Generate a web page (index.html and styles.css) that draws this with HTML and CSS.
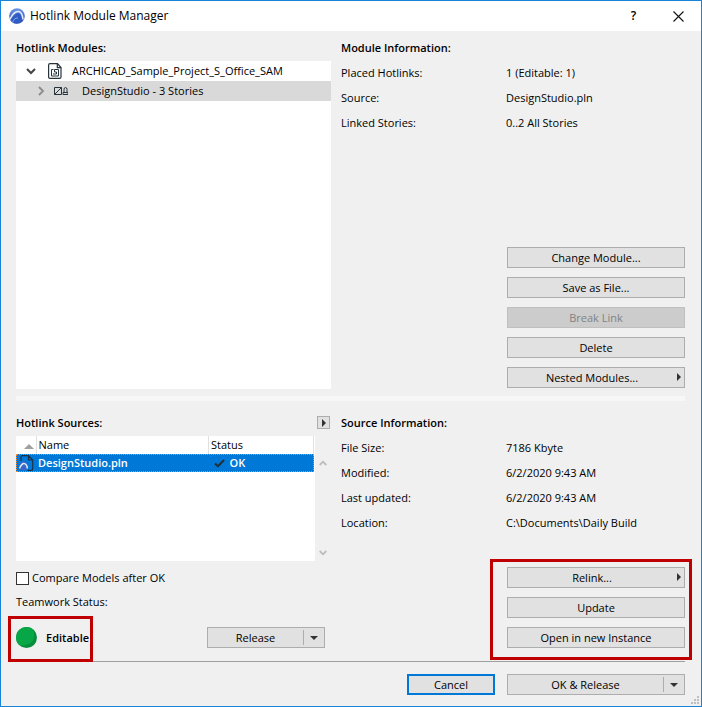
FILE: index.html
```html
<!DOCTYPE html>
<html lang="en">
<head>
<meta charset="utf-8">
<meta name="viewport" content="width=device-width, initial-scale=1">
<title>Hotlink Module Manager</title>
<link rel="stylesheet" href="styles.css">
</head>
<body>
<div class="window" role="dialog" aria-labelledby="dialog-title">
  <header class="titlebar">
    <svg class="app-icon" viewBox="0 0 16 16" aria-hidden="true">
      <defs>
        <linearGradient id="ball" x1="0" y1="0" x2="0" y2="1">
          <stop offset="0" stop-color="#6f98e6"/>
          <stop offset="1" stop-color="#2748a8"/>
        </linearGradient>
      </defs>
      <circle cx="8" cy="8" r="7.8" fill="url(#ball)"/>
      <path d="M.8 11.500C3 7 6.500 3.300 9.500 3.600C12.300 4 13.600 7.500 14 11.500" fill="none" stroke="#e6edfb" stroke-width="1.500"/>
      <path d="M1.500 12.500C4 8.300 7 5 9.300 5.200C11.500 5.500 12.600 9 12.800 13Q8 17.500 3 14z" fill="#2f5cc4"/>
      <path d="M3.500 14.500C4.500 11.500 6.600 9.600 9 10" fill="none" stroke="#8facea" stroke-width="1"/>
    </svg>
    <h1 class="title" id="dialog-title">Hotlink Module Manager</h1>
    <button class="caption-button" type="button" aria-label="Help">?</button>
    <button class="caption-button" type="button" aria-label="Close">
      <svg class="close-icon" viewBox="0 0 11 11" aria-hidden="true"><path d="M.5.5l10 10M10.500.5l-10 10" fill="none" stroke="#111" stroke-width="1.1"/></svg>
    </button>
  </header>

  <main class="content">
    <section class="panes panes-modules">
      <div class="pane">
        <h2 class="heading">Hotlink Modules:</h2>
        <ul class="tree">
          <li class="tree-row">
            <button class="expander" type="button" aria-label="Collapse">
              <svg class="chevron" viewBox="0 0 10 10" aria-hidden="true"><path d="M1 3l4 4 4-4" fill="none" stroke="#444" stroke-width="2"/></svg>
            </button>
            <svg class="file-icon" viewBox="0 0 14 16" aria-hidden="true">
              <path d="M2 .6h7.500L13 4.500V14q0 1.400-1.400 1.400H2Q.6 15.400.6 14V2Q.6.6 2 .6zM9.300.7v4H13" fill="none" stroke="#26343b" stroke-width="1.200"/>
              <path d="M5.500 6.500h-2v6.500h7V6.500H6.500V9h2v2H5" fill="none" stroke="#26343b" stroke-width="1"/>
            </svg>
            <span>ARCHICAD_Sample_Project_S_Office_SAM</span>
          </li>
          <li class="tree-row tree-child selected">
            <button class="expander" type="button" aria-label="Expand">
              <svg class="chevron" viewBox="0 0 10 10" aria-hidden="true"><path d="M3 1l4 4-4 4" fill="none" stroke="#8b8b8b" stroke-width="1.800"/></svg>
            </button>
            <svg class="link-icon" viewBox="0 0 14 8" aria-hidden="true">
              <path d="M.5.500h7v7h-7zM.5 7.500l7-7M9 5.500h5v2H9z" fill="none" stroke="#26343b" stroke-width="1"/>
              <path d="M10 5V2.500Q10 .5 11.500.5T13 2.500V5" fill="none" stroke="#26343b" stroke-width="1"/>
            </svg>
            <span>DesignStudio - 3 Stories</span>
          </li>
        </ul>
      </div>
      <div class="pane">
        <h2 class="heading">Module Information:</h2>
        <dl class="info">
          <dt>Placed Hotlinks:</dt><dd>1 (Editable: 1)</dd>
          <dt>Source:</dt><dd>DesignStudio.pln</dd>
          <dt>Linked Stories:</dt><dd>0..2 All Stories</dd>
        </dl>
        <div class="actions">
          <button class="button" type="button">Change Module...</button>
          <button class="button" type="button">Save as File...</button>
          <button class="button" type="button" disabled>Break Link</button>
          <button class="button" type="button">Delete</button>
          <button class="button has-menu" type="button">Nested Modules...</button>
        </div>
      </div>
    </section>

    <div class="splitter"></div>

    <section class="panes">
      <div class="pane">
        <div class="heading-row">
          <h2 class="heading">Hotlink Sources:</h2>
          <button class="flyout" type="button" aria-label="Source options"></button>
        </div>
        <div class="sources">
          <div class="sources-list">
            <table class="sources-table">
              <colgroup><col class="col-icon"><col><col class="col-status"></colgroup>
              <thead>
                <tr><th><span class="sort-mark"></span></th><th>Name</th><th>Status</th></tr>
              </thead>
              <tbody>
                <tr>
                  <td>
                    <svg class="pln-icon" viewBox="0 0 15 16" aria-hidden="true">
                      <path d="M2 6V2Q2 .7 3.300.7H9.500L13.700 5V14q0 1.300-1.300 1.300H8.500M9.500.7V5h4" fill="none" stroke="#1c3347" stroke-width="1.200"/>
                      <circle cx="4.500" cy="11" r="4.500" fill="#3c66c4"/>
                      <path d="M.5 13.500Q3 7.800 5.500 8.600 8.200 9.500 8.300 13.500" fill="none" stroke="#e3ebfb" stroke-width="1.500"/>
                    </svg>
                  </td>
                  <td>DesignStudio.pln</td>
                  <td>
                    <span class="status">
                      <svg class="check" viewBox="0 0 11 10" aria-hidden="true"><path d="M1 5.500l3 2.700L10 2" fill="none" stroke="#20323d" stroke-width="2.200"/></svg>
                      OK
                    </span>
                  </td>
                </tr>
              </tbody>
            </table>
          </div>
          <div class="scrollbar">
            <svg class="scroll-arrow" viewBox="0 0 8 6" aria-hidden="true"><path d="M.7 5L4 1.700 7.300 5" fill="none" stroke="#bcbcbc" stroke-width="1.800"/></svg>
            <svg class="scroll-arrow" viewBox="0 0 8 6" aria-hidden="true"><path d="M.7 1L4 4.300 7.300 1" fill="none" stroke="#bcbcbc" stroke-width="1.800"/></svg>
          </div>
        </div>
        <label class="check-row"><input class="checkbox" type="checkbox">Compare Models after OK</label>
        <p class="teamwork">Teamwork Status:</p>
        <div class="teamwork-row">
          <div class="teamwork-state callout">
            <svg class="state-dot" viewBox="0 0 21 21" aria-hidden="true">
              <circle cx="10.500" cy="10.500" r="10.500" fill="#078e3c"/>
              <path d="M17 2.300A10.500 10.500 0 0 0 0 10.500Q0 15 3.200 18Q12 19.500 17 13.500 19.500 8 17 2.300z" fill="#07a647"/>
            </svg>
            <strong class="state-text">Editable</strong>
          </div>
          <div class="split split-release">
            <button class="split-main" type="button">Release</button>
            <button class="split-arrow" type="button" aria-label="Release options"></button>
          </div>
        </div>
      </div>
      <div class="pane">
        <h2 class="heading">Source Information:</h2>
        <dl class="info">
          <dt>File Size:</dt><dd>7186 Kbyte</dd>
          <dt>Modified:</dt><dd>6/2/2020 9:43 AM</dd>
          <dt>Last updated:</dt><dd>6/2/2020 9:43 AM</dd>
          <dt>Location:</dt><dd>C:\Documents\Daily Build</dd>
        </dl>
        <div class="actions callout">
          <button class="button has-menu" type="button">Relink...</button>
          <button class="button" type="button">Update</button>
          <button class="button" type="button">Open in new Instance</button>
        </div>
      </div>
    </section>

    <footer class="footer">
      <button class="button button-cancel" type="button">Cancel</button>
      <div class="split split-ok">
        <button class="split-main" type="button">OK &amp; Release</button>
        <button class="split-arrow" type="button" aria-label="OK options"></button>
      </div>
    </footer>
  </main>
  <svg class="grip" viewBox="0 0 8 8" aria-hidden="true">
    <path d="M6 0h2v2h-2zM3 3h2v2h-2zM6 3h2v2h-2zM0 6h2v2h-2zM3 6h2v2h-2zM6 6h2v2h-2z" fill="#bfbfbf"/>
  </svg>
</div>
</body>
</html>
```

FILE: styles.css
```css
* {
  box-sizing: border-box;
}

body {
  margin: 0;
  background: #f0f0f0;
  color: #000;
  font: 11px/20px "Open Sans", "Noto Sans", sans-serif;
}

button {
  margin: 0;
  padding: 0;
  border: 0;
  background: none;
  color: inherit;
  font: inherit;
}

svg {
  display: block;
  flex: none;
}

h1, h2, p, ul, dl, dd {
  margin: 0;
  padding: 0;
}

.window {
  position: relative;
  display: flex;
  flex-direction: column;
  min-height: 100vh;
  border: 1px solid #1883d7;
}

.titlebar {
  display: flex;
  align-items: center;
  height: 30px;
  padding-left: 8px;
  background: #fff;
}

.app-icon {
  width: 16px;
  height: 16px;
}

.title {
  flex: 1;
  padding-left: 5px;
  font-size: 12px;
  font-weight: 400;
}

.caption-button {
  display: grid;
  place-items: center;
  width: 45px;
  height: 30px;
  font-size: 12px;
  font-weight: 600;
}

.close-icon {
  width: 11px;
  height: 11px;
}

.content {
  display: flex;
  flex: 1;
  flex-direction: column;
  padding: 5px 16px 11px 15px;
}

.panes {
  display: grid;
  grid-template-columns: 315fr 344fr;
  column-gap: 10px;
}

.panes-modules {
  flex: 1;
}

.pane {
  display: flex;
  flex-direction: column;
  min-width: 0;
}

.heading {
  flex: none;
  padding-bottom: 2px;
  font-size: 11px;
  font-weight: 600;
  line-height: 23px;
}

.tree {
  flex: 1;
  background: #fff;
  list-style: none;
}

.tree-row {
  display: flex;
  align-items: center;
  gap: 10px;
  height: 20px;
  padding-left: 10px;
}

.tree-child {
  gap: 6px;
  padding-left: 20px;
}

.tree-row.selected {
  background: #d9d9d9;
}

.expander {
  width: 12px;
}

.chevron {
  width: 10px;
  height: 10px;
}

.file-icon {
  width: 14px;
  height: 16px;
}

.link-icon {
  width: 14px;
  height: 8px;
  margin-right: 8px;
}

.info {
  display: grid;
  grid-template-columns: 165px 1fr;
  line-height: 25px;
  margin-top: -1px;
}

.actions {
  display: flex;
  flex-direction: column;
  align-self: flex-end;
  gap: 9px;
  width: 178px;
  margin-top: auto;
  padding-bottom: 1px;
}

.button {
  position: relative;
  height: 21px;
  border: 1px solid #adadad;
  background: #e1e1e1;
  line-height: 19px;
  text-align: center;
}

.button:disabled {
  border-color: #bfbfbf;
  background: #ccc;
  color: #838383;
}

.has-menu {
  padding-right: 8px;
}

.has-menu::after {
  position: absolute;
  top: 5px;
  right: 3px;
  border: 4px solid transparent;
  border-right: 0;
  border-left-color: #333;
  content: "";
}

.splitter {
  height: 5px;
  margin: 7px 0 10px;
  background: #f7f7f7;
}

.heading-row {
  display: flex;
  align-items: center;
  justify-content: space-between;
}

.flyout {
  display: grid;
  place-items: center;
  width: 13px;
  height: 13px;
  margin: 0 1px 2px 0;
  border: 1px solid #adadad;
  background: #e1e1e1;
}

.flyout::after {
  border: 4px solid transparent;
  border-right: 0;
  border-left-color: #333;
  content: "";
}

.sources {
  display: flex;
  min-height: 125px;
}

.sources-list {
  flex: 1;
  padding-right: 1px;
  background: #fff;
}

.sources-table {
  width: 100%;
  border-collapse: collapse;
  table-layout: fixed;
  line-height: 18px;
}

.col-icon {
  width: 20px;
}

.col-status {
  width: 105px;
}

.sources-table th,
.sources-table td {
  height: 18px;
  padding: 0 0 0 2px;
  text-align: left;
}

.sources-table th {
  border-right: 1px solid #e0e0e0;
  font-weight: 400;
}

.sources-table td:first-child {
  padding: 0 0 0 3px;
}

.sources-table tbody tr {
  outline: 1px dotted #ff8728;
  outline-offset: -1px;
  background: #0078d7;
  color: #fff;
  font-weight: 600;
}

.sort-mark {
  display: block;
  width: 10px;
  margin: 3px 0 0 6px;
  border: 5px solid transparent;
  border-top: 0;
  border-bottom-color: #a0a0a0;
}

.pln-icon {
  width: 15px;
  height: 16px;
}

.status {
  display: flex;
  align-items: center;
  gap: 5px;
  padding-left: 3px;
}

.check {
  width: 11px;
  height: 10px;
}

.scrollbar {
  display: flex;
  flex-direction: column;
  align-items: center;
  justify-content: space-between;
  width: 16px;
  padding: 24px 0 5px;
}

.scroll-arrow {
  width: 8px;
  height: 6px;
}

.check-row {
  display: flex;
  align-items: center;
  gap: 3px;
  padding-top: 7px;
}

.checkbox {
  width: 13px;
  height: 13px;
  margin: 0;
  border: 1px solid #333;
  background: #fff;
  appearance: none;
}

.checkbox:checked {
  background: #0078d7;
}

.teamwork {
  padding-top: 4px;
}

.teamwork-row {
  display: flex;
  align-items: center;
  justify-content: space-between;
  padding: 15px 6px 1px 0;
}

.teamwork-state {
  display: flex;
  align-items: center;
  gap: 9px;
  width: 74px;
  height: 21px;
}

.state-text {
  font-weight: 600;
}

.state-dot {
  width: 21px;
  height: 21px;
}

.callout {
  position: relative;
}

.callout::before {
  position: absolute;
  inset: -11px -3px -14px -8px;
  border: 3px solid #c00000;
  content: "";
  pointer-events: none;
}

.actions.callout::before {
  inset: -8px -7px -11px -17px;
}

.split {
  display: flex;
  align-items: center;
  height: 21px;
  border: 1px solid #adadad;
  background: #e1e1e1;
  line-height: 19px;
}

.split-release {
  width: 118px;
}

.split-ok {
  width: 178px;
}

.split-main {
  flex: 1;
}

.split-arrow {
  display: grid;
  place-items: center;
  width: 21px;
  height: 15px;
  border-left: 1px solid #adadad;
}

.split-arrow::after {
  border: 4px solid transparent;
  border-bottom: 0;
  border-top-color: #333;
  content: "";
}

.footer {
  display: flex;
  justify-content: flex-end;
  gap: 12px;
  margin-top: 12px;
  padding-top: 12px;
  border-top: 1px solid #a0a0a0;
}

.button-cancel {
  width: 88px;
  border: 2px solid #0078d7;
  line-height: 17px;
}

.grip {
  position: absolute;
  right: 2px;
  bottom: 2px;
  width: 8px;
  height: 8px;
}
```
